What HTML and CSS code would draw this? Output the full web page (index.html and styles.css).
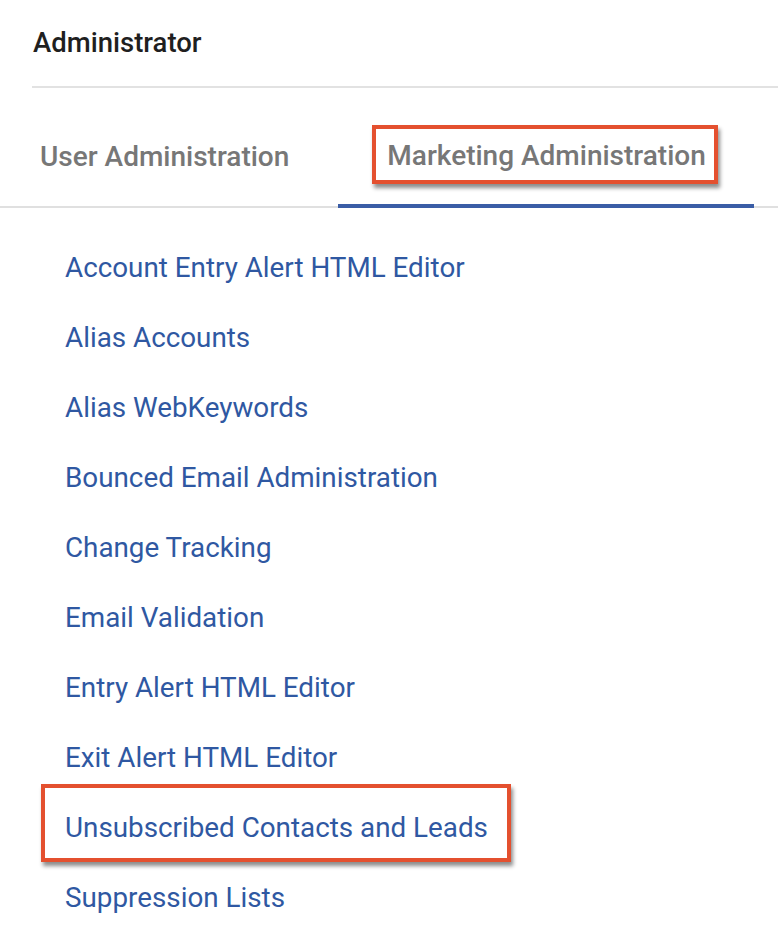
FILE: index.html
```html
<!DOCTYPE html>
<html lang="en">
<head>
<meta charset="utf-8">
<title>Administrator</title>
<link rel="stylesheet" href="styles.css">
</head>
<body>
<div class="page">
  <header class="head">
    <h1 class="title">Administrator</h1>
    <div class="divider"></div>
  </header>
  <nav class="tabs">
    <div class="tab tab-first"><span class="tab-label">User Administration</span></div>
    <div class="tab tab-active">
      <span class="tab-label">Marketing Administration<span class="mark mark-tab"></span></span>
    </div>
  </nav>
  <ul class="links">
    <li><a class="link">Account Entry Alert HTML Editor</a></li>
    <li><a class="link">Alias Accounts</a></li>
    <li><a class="link">Alias WebKeywords</a></li>
    <li><a class="link">Bounced Email Administration</a></li>
    <li><a class="link">Change Tracking</a></li>
    <li><a class="link">Email Validation</a></li>
    <li><a class="link">Entry Alert HTML Editor</a></li>
    <li><a class="link">Exit Alert HTML Editor</a></li>
    <li><a class="link">Unsubscribed Contacts and Leads<span class="mark mark-link"></span></a></li>
    <li><a class="link">Suppression Lists</a></li>
  </ul>
</div>
</body>
</html>
```

FILE: styles.css
```css
* { box-sizing: border-box; }
html, body { margin: 0; padding: 0; background: #fff; }
body {
  font-family: Roboto, "Noto Sans", "Liberation Sans", sans-serif;
  width: 778px;
  height: 934px;
  overflow: hidden;
}
.page { width: 778px; }
.head { padding-left: 32px; }
.title {
  margin: 0;
  padding: 25px 0 0 1px;
  height: 86px;
  font-size: 27.5px;
  font-weight: 500;
  color: #1f1f1f;
  line-height: 36px;
}
.divider {
  height: 2px;
  background: #e2e2e2;
}
.tabs {
  display: flex;
  border-bottom: 2px solid #e0e0e0;
  height: 120px;
}
.tab {
  display: flex;
  align-items: center;
  padding-top: 20px;
  font-size: 28px;
  font-weight: 500;
  color: #777;
  white-space: nowrap;
}
.tab-label { position: relative; line-height: 32px; }
.tab-first { padding-left: 40px; padding-right: 49px; }
.tab-active {
  padding-left: 49px;
  padding-right: 48px;
  border-bottom: 4px solid #3a5da6;
  margin-bottom: -2px;
}
.mark {
  position: absolute;
  border: 4px solid #e4502f;
  box-shadow: 2px 4px 4px rgba(0,0,0,0.45);
  pointer-events: none;
}
.mark-tab { left: -15px; right: -12px; top: -15px; bottom: -12px; }
.links {
  list-style: none;
  margin: 0;
  padding: 25px 0 0 65px;
}
.links li { height: 70px; display: flex; align-items: center; }
.link {
  position: relative;
  font-size: 27.8px;
  line-height: 32px;
  color: #2f58a2;
  white-space: nowrap;
}
.mark-link { left: -24px; right: -23px; top: -28px; bottom: -18px; }
```
